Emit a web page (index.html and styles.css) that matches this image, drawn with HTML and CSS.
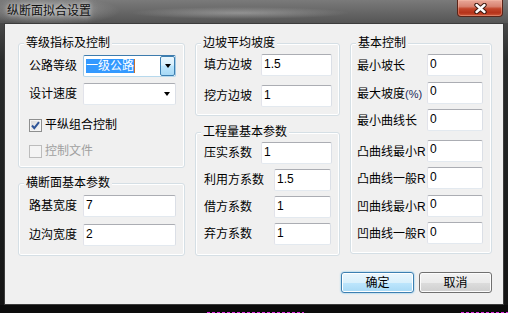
FILE: index.html
```html
<!DOCTYPE html>
<html lang="zh-CN">
<head>
    <meta charset="UTF-8">
    <title>纵断面拟合设置</title>
    <link rel="stylesheet" href="styles.css">
</head>
<body>

<div class="window">
    <div class="titlebar">
        <span class="title">纵断面拟合设置</span>
        <div class="close-btn">
            <svg width="13" height="11" viewBox="0 0 13 11">
                <path d="M2.5 2 L10.5 9 M10.5 2 L2.5 9" stroke="#3b1810" stroke-width="4.4" stroke-linecap="round"/>
                <path d="M2.5 2 L10.5 9 M10.5 2 L2.5 9" stroke="#fff" stroke-width="2.4" stroke-linecap="round"/>
            </svg>
        </div>
    </div>

    <div class="client">
        <div class="columns">
            <div class="col col-left">
                <div class="group group-grade">
                    <span class="group-title">等级指标及控制</span>
                    <div class="rows">
                        <div class="field">
                            <span class="label">公路等级</span>
                            <div class="combo combo-focus">
                                <span class="combo-text"><span class="selected">一级公路</span><span class="caret"></span></span>
                                <span class="combo-btn"><i class="arrow"></i></span>
                            </div>
                        </div>
                        <div class="field">
                            <span class="label">设计速度</span>
                            <div class="combo">
                                <span class="combo-text"></span>
                                <span class="combo-drop"><i class="arrow"></i></span>
                            </div>
                        </div>
                        <div class="check-row first-check">
                            <span class="checkbox">
                                <svg width="11" height="11" viewBox="0 0 11 11">
                                    <path d="M2 5.5 L4.3 8.2 L9 2.2" fill="none" stroke="#2f5598" stroke-width="2"/>
                                </svg>
                            </span>
                            平纵组合控制
                        </div>
                        <div class="check-row disabled">
                            <span class="checkbox"></span>
                            控制文件
                        </div>
                    </div>
                </div>

                <div class="group group-section">
                    <span class="group-title">横断面基本参数</span>
                    <div class="rows">
                        <div class="field">
                            <span class="label">路基宽度</span>
                            <input class="input" type="text" value="7">
                        </div>
                        <div class="field">
                            <span class="label">边沟宽度</span>
                            <input class="input" type="text" value="2">
                        </div>
                    </div>
                </div>
            </div>

            <div class="col col-mid">
                <div class="group group-slope">
                    <span class="group-title">边坡平均坡度</span>
                    <div class="rows">
                        <div class="field">
                            <span class="label">填方边坡</span>
                            <input class="input" type="text" value="1.5">
                        </div>
                        <div class="field">
                            <span class="label">挖方边坡</span>
                            <input class="input" type="text" value="1">
                        </div>
                    </div>
                </div>

                <div class="group group-volume">
                    <span class="group-title">工程量基本参数</span>
                    <div class="rows">
                        <div class="field field-short">
                            <span class="label">压实系数</span>
                            <input class="input" type="text" value="1">
                        </div>
                        <div class="field">
                            <span class="label">利用方系数</span>
                            <input class="input" type="text" value="1.5">
                        </div>
                        <div class="field">
                            <span class="label">借方系数</span>
                            <input class="input" type="text" value="1">
                        </div>
                        <div class="field">
                            <span class="label">弃方系数</span>
                            <input class="input" type="text" value="1">
                        </div>
                    </div>
                </div>
            </div>

            <div class="col col-right">
                <div class="group group-basic">
                    <span class="group-title">基本控制</span>
                    <div class="rows">
                        <div class="field">
                            <span class="label">最小坡长</span>
                            <input class="input" type="text" value="0">
                        </div>
                        <div class="field">
                            <span class="label">最大坡度<span class="unit">(%)</span></span>
                            <input class="input" type="text" value="0">
                        </div>
                        <div class="field">
                            <span class="label">最小曲线长</span>
                            <input class="input" type="text" value="0">
                        </div>
                        <div class="field spaced">
                            <span class="label">凸曲线最小R</span>
                            <input class="input" type="text" value="0">
                        </div>
                        <div class="field">
                            <span class="label">凸曲线一般R</span>
                            <input class="input" type="text" value="0">
                        </div>
                        <div class="field">
                            <span class="label">凹曲线最小R</span>
                            <input class="input" type="text" value="0">
                        </div>
                        <div class="field">
                            <span class="label">凹曲线一般R</span>
                            <input class="input" type="text" value="0">
                        </div>
                    </div>
                </div>
            </div>
        </div>

        <div class="buttons">
            <button class="btn btn-default">确定</button>
            <button class="btn">取消</button>
        </div>
    </div>

    <div class="frame-bottom"></div>
</div>

</body>
</html>
```

FILE: styles.css
```css
html, body {
    margin: 0;
    padding: 0;
    background-color: #111;
    font-family: "Liberation Sans", "Noto Sans CJK SC", sans-serif;
    font-size: 12px;
    color: #000;
}
.window {
    width: 508px;
    height: 313px;
    overflow: hidden;
    display: flex;
    flex-direction: column;
    background: linear-gradient(#6a6a6a, #4a4a4a 20px, #2a2c2c 60px, #1c1e1e 200px, #141414);
}
.titlebar {
    height: 23px;
    flex-shrink: 0;
    display: flex;
    justify-content: space-between;
    align-items: flex-start;
    padding: 0 5px 0 7px;
    background:
        radial-gradient(ellipse 70px 14px at 50px 11px, rgba(200, 200, 200, 0.55), transparent),
        radial-gradient(ellipse 110px 6px at 240px 13px, rgba(230, 230, 230, 0.35), transparent),
        linear-gradient(#7a7a7a, #555 23px);
}
.title {
    margin-top: 4px;
    line-height: 14px;
    color: #111;
    text-shadow: 0 0 4px rgba(230, 230, 230, 0.9), 0 0 9px rgba(220, 220, 220, 0.7);
}
.close-btn {
    width: 46px;
    height: 17px;
    box-sizing: border-box;
    border: 1px solid #5b2418;
    border-top: none;
    border-radius: 0 0 4px 4px;
    background: linear-gradient(#e9a899, #d88371 40%, #c2452a 55%, #b5321a 80%, #cf5a3c);
    box-shadow: inset 0 0 0 1px rgba(255, 200, 180, 0.35);
    display: flex;
    justify-content: center;
    align-items: center;
}
.client {
    margin: 0 4px;
    height: 282px;
    flex-shrink: 0;
    box-sizing: border-box;
    border: 1px solid #3c3c3c;
    background-color: #f0f0f0;
    display: flex;
    flex-direction: column;
}
.frame-bottom {
    flex: 1;
    background:
        repeating-linear-gradient(to right, #e02ce0 0 3px, transparent 3px 5px) 207px 7px / 97px 1px no-repeat,
        repeating-linear-gradient(to right, #e02ce0 0 3px, transparent 3px 5px) 461px 7px / 47px 1px no-repeat,
        #0c0c0c;
}
.columns {
    display: flex;
    align-items: flex-start;
    gap: 10px;
    padding: 19px 11px 0 13px;
}
.col {
    display: flex;
    flex-direction: column;
}
.col-left {
    width: 167px;
}
.col-mid {
    width: 145px;
}
.col-right {
    width: 142px;
}
.group {
    box-sizing: border-box;
    border: 1px solid #d5dfe5;
    border-radius: 3px;
    box-shadow: inset 0 0 0 1px #fff;
    display: flex;
    flex-direction: column;
}
.group-title {
    align-self: flex-start;
    height: 14px;
    line-height: 14px;
    margin: -8px 0 0 5px;
    padding: 0 2px;
    background-color: #f0f0f0;
    white-space: nowrap;
}
.rows {
    display: flex;
    flex-direction: column;
}
.field {
    display: flex;
    align-items: center;
    height: 22px;
}
.label {
    line-height: 14px;
    white-space: nowrap;
    flex-shrink: 0;
}
.input {
    box-sizing: border-box;
    height: 22px;
    margin: 0;
    padding: 0 2px 3px 2px;
    border: 1px solid;
    border-color: #abadb3 #dbdfe6 #e3e9ef #e2e3ea;
    border-radius: 2px;
    background-color: #fff;
    font: inherit;
    color: #000;
    outline: none;
}

/* 等级指标及控制 */
.group-grade {
    height: 125px;
}
.group-grade .rows {
    padding: 5px 0 0 10px;
    gap: 6px;
}
.group-grade .label, .group-section .label {
    width: 54px;
}
.combo {
    box-sizing: border-box;
    width: 93px;
    height: 22px;
    border: 1px solid;
    border-color: #abadb3 #dbdfe6 #e3e9ef #e2e3ea;
    border-radius: 2px;
    background-color: #fff;
    display: flex;
    align-items: stretch;
}
.combo-focus {
    border-color: #3d7bad #a4c9e3 #b7d9ed #a4c9e3;
}
.combo-text {
    flex: 1;
    display: flex;
    align-items: center;
    padding-left: 2px;
}
.selected {
    background-color: #3399ff;
    color: #fff;
    line-height: 14px;
    height: 14px;
}
.caret {
    width: 1px;
    height: 14px;
    background-color: #c8702c;
}
.combo-btn {
    width: 15px;
    box-sizing: border-box;
    border: 1px solid #3c7fb1;
    border-radius: 2px;
    background: linear-gradient(#eaf6fd, #d9f0fc 45%, #bee6fd 50%, #a7d9f5);
    display: flex;
    justify-content: center;
    align-items: center;
}
.combo-drop {
    width: 17px;
    display: flex;
    justify-content: center;
    align-items: center;
}
.arrow {
    width: 0;
    height: 0;
    border-left: 3.5px solid transparent;
    border-right: 3.5px solid transparent;
    border-top: 4px solid #000;
}
.check-row {
    display: flex;
    align-items: center;
    gap: 3px;
    height: 20px;
    line-height: 14px;
}
.first-check {
    margin-top: 4px;
}
.checkbox {
    width: 13px;
    height: 13px;
    box-sizing: border-box;
    border: 1px solid #8e8f8f;
    box-shadow: inset 0 0 0 1px #f4f4f4;
    background: linear-gradient(135deg, #d8d8d8, #f8f8f8);
    display: flex;
    justify-content: center;
    align-items: center;
}
.check-row.disabled {
    color: #a0a0a0;
}
.disabled .checkbox {
    border-color: #bcbcbc;
    background: #f4f4f4;
    box-shadow: none;
}

/* 横断面基本参数 */
.group-section {
    height: 73px;
    margin-top: 15px;
}
.group-section .rows {
    padding: 5px 0 0 10px;
    gap: 7px;
}
.group-grade .input, .group-section .input {
    width: 93px;
}

/* 边坡平均坡度 */
.group-slope {
    height: 73px;
}
.group-slope .rows {
    padding: 4px 0 0 8px;
    gap: 9px;
}
.group-slope .label {
    width: 57px;
}
.group-slope .input {
    width: 71px;
}

/* 工程量基本参数 */
.group-volume {
    height: 124px;
    margin-top: 16px;
}
.group-volume .rows {
    padding: 3px 0 0 8px;
    gap: 5px;
}
.group-volume .label {
    width: 70px;
}
.group-volume .input {
    width: 57px;
}
.group-volume .field-short .label {
    width: 57px;
}
.group-volume .field-short .input {
    width: 71px;
}

/* 基本控制 */
.group-basic {
    height: 211px;
}
.group-basic .rows {
    padding: 4px 0 0 6px;
    gap: 5.5px;
}
.group-basic .label {
    width: 70px;
    padding-top: 2px;
}
.group-basic .input {
    width: 56px;
}
.field.spaced {
    margin-top: 3px;
}
.unit {
    font-size: 11px;
    color: #1c2a5a;
}

.buttons {
    display: flex;
    justify-content: flex-end;
    gap: 5px;
    padding: 16px 11px 0 0;
}
.btn {
    width: 73px;
    height: 21px;
    box-sizing: border-box;
    margin: 0;
    padding: 0;
    border: 1px solid #707070;
    border-radius: 3px;
    background: linear-gradient(#f2f2f2, #ebebeb 50%, #dddddd 50%, #cfcfcf);
    box-shadow: inset 0 0 0 1px #fcfcfc;
    font: inherit;
    line-height: 14px;
    color: #000;
}
.btn-default {
    border-color: #3c7fb1;
    background: linear-gradient(#eaf6fd, #d9f0fc 50%, #bee6fd 50%, #a7d9f5);
    box-shadow: inset 0 0 0 1px #fff, 0 0 2px #61b9ec;
}
```
